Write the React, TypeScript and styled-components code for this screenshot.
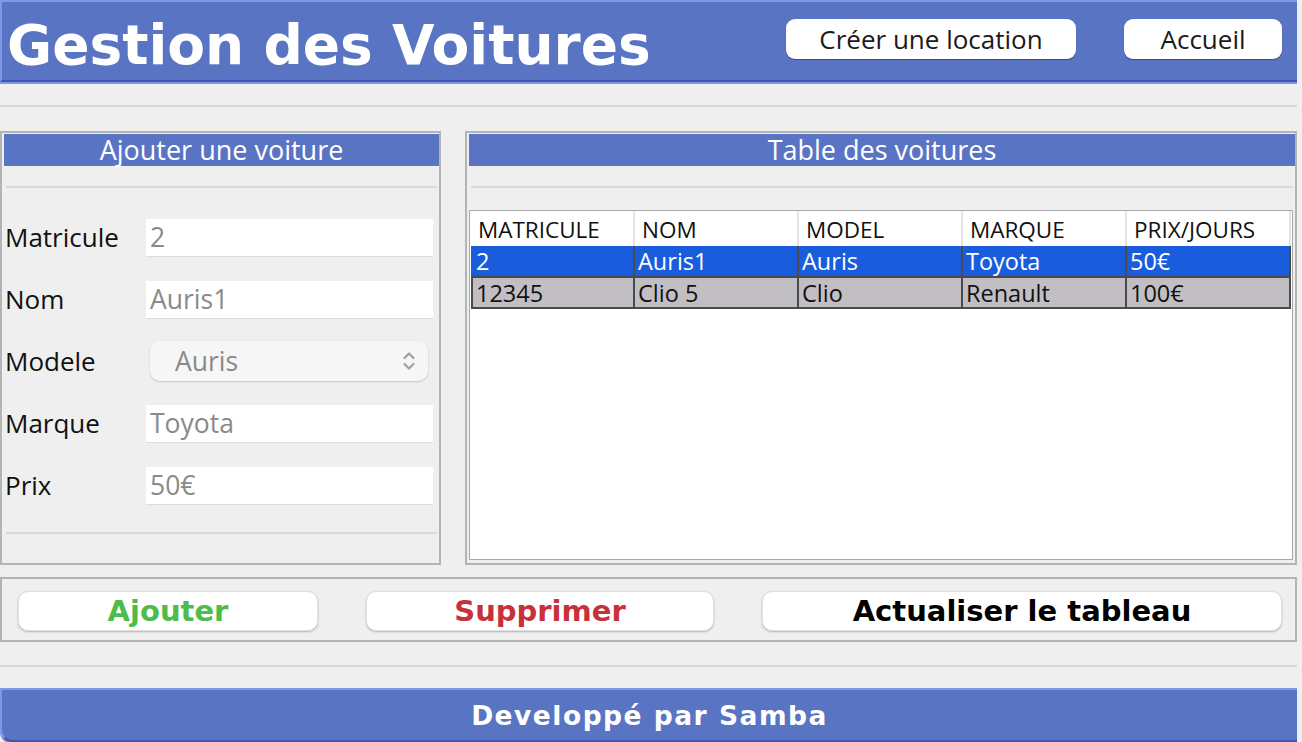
import React from 'react';
import styled, { createGlobalStyle } from 'styled-components';

const BLUE = '#5a74c4';
const BLUE_LIGHT = '#7d97ec';
const BLUE_DARK = '#3f57a6';

const GlobalStyle = createGlobalStyle`
  html, body {
    margin: 0;
    padding: 0;
    background: #efefef;
  }
  body {
    font-family: 'Open Sans', 'DejaVu Sans', sans-serif;
  }
  * {
    box-sizing: border-box;
  }
`;

const Window = styled.div`
  width: 1302px;
  height: 742px;
  overflow: hidden;
  background: #efefef;
`;

const Frame = styled.div`
  width: 1297px;
  display: flex;
  flex-direction: column;
`;

const TopBar = styled.header`
  height: 82px;
  display: flex;
  align-items: center;
  gap: 48px;
  padding: 0 15px 0 5px;
  background: ${BLUE};
  border-top: 2px solid ${BLUE_LIGHT};
  border-left: 2px solid ${BLUE_LIGHT};
  border-bottom: 2px solid ${BLUE_DARK};
  box-shadow: 0 2px 0 ${BLUE_LIGHT};
`;

const Title = styled.h1`
  flex: 1;
  margin: 0;
  padding-top: 8px;
  font-family: 'DejaVu Sans', sans-serif;
  font-weight: 700;
  font-size: 55px;
  line-height: 1;
  color: #ffffff;
  white-space: nowrap;
`;

const NavButton = styled.button<{ $width: number }>`
  width: ${(p) => p.$width}px;
  height: 40px;
  margin-top: -4px;
  border: none;
  border-radius: 9px;
  background: #ffffff;
  box-shadow: 0 1px 1px rgba(0, 0, 0, 0.35);
  font-family: 'Open Sans', sans-serif;
  font-size: 26px;
  color: #1a1a1a;
  padding: 0;
  cursor: pointer;
`;

const Rule = styled.hr<{ $top: number; $bottom: number; $side?: number }>`
  border: none;
  height: 2px;
  background: #d8d8d8;
  margin: ${(p) => `${p.$top}px ${p.$side ?? 0}px ${p.$bottom}px`};
`;

const Workspace = styled.main`
  display: flex;
  gap: 24px;
  height: 434px;
`;

const Panel = styled.section<{ $width: number }>`
  width: ${(p) => p.$width}px;
  border: 2px solid #b4b4b4;
  padding: 1px 0 1px 2px;
  display: flex;
  flex-direction: column;
`;

const PanelTitle = styled.h2`
  margin: 0;
  height: 32px;
  background: ${BLUE};
  color: #ffffff;
  font-family: 'Open Sans', sans-serif;
  font-weight: 400;
  font-size: 27px;
  line-height: 32px;
  text-align: center;
`;

const Form = styled.div`
  display: flex;
  flex-direction: column;
`;

const FormRow = styled.div`
  height: 62px;
  display: grid;
  grid-template-columns: 142px 1fr;
  align-items: center;
`;

const Label = styled.label`
  padding-left: 1px;
  font-size: 26px;
  color: #111111;
`;

const Field = styled.div`
  height: 37px;
  margin-right: 6px;
  padding-left: 4px;
  background: #ffffff;
  box-shadow: 0 1px 0 #dcdcdc;
  font-size: 26.5px;
  line-height: 37px;
  color: #8a8a8a;
`;

const Combo = styled.div`
  height: 40px;
  margin: 0 11px 0 4px;
  padding: 0 12px 0 25px;
  display: flex;
  align-items: center;
  justify-content: space-between;
  border-radius: 10px;
  background: #f6f6f6;
  box-shadow: 0 1px 2px rgba(0, 0, 0, 0.18);
  font-size: 26.5px;
  color: #8a8a8a;
`;

const TableBox = styled.div`
  height: 350px;
  margin-right: 2px;
  border: 1px solid #a9a9a9;
  background: #ffffff;
  padding: 0 1px;
`;

const Row = styled.div`
  display: grid;
  grid-template-columns: repeat(5, 164px);
`;

const HeadCell = styled.div`
  height: 35px;
  padding: 3px 0 0 7px;
  font-size: 22.5px;
  color: #111111;
  border-right: 2px solid #e4e4e4;
  white-space: nowrap;
`;

const Cell = styled.div<{ $selected: boolean; $first: boolean }>`
  height: ${(p) => (p.$selected ? 32 : 31)}px;
  padding-left: 3px;
  font-size: 23.5px;
  line-height: 30px;
  background: ${(p) => (p.$selected ? '#1a5ddc' : '#c1bfc4')};
  color: ${(p) => (p.$selected ? '#ffffff' : '#111111')};
  border-right: 2px solid #4a4a4a;
  border-bottom: 2px solid #4a4a4a;
  border-left: ${(p) => (p.$first ? `2px solid ${p.$selected ? '#1a5ddc' : '#4a4a4a'}` : 'none')};
  white-space: nowrap;
`;

const ActionBar = styled.div`
  margin-top: 12px;
  height: 65px;
  border: 2px solid #b4b4b4;
  padding: 12px 0 0 16px;
  display: flex;
  gap: 48px;
`;

const ActionButton = styled.button<{ $width: number; $color: string }>`
  width: ${(p) => p.$width}px;
  height: 40px;
  border: 1px solid #e0e0e0;
  border-radius: 10px;
  background: #ffffff;
  box-shadow: 0 1px 2px rgba(0, 0, 0, 0.25);
  font-family: 'DejaVu Sans', sans-serif;
  font-weight: 700;
  font-size: 29px;
  color: ${(p) => p.$color};
  padding: 0;
  cursor: pointer;
`;

const Footer = styled.footer`
  height: 54px;
  display: flex;
  align-items: center;
  justify-content: center;
  background: ${BLUE};
  border-top: 2px solid ${BLUE_LIGHT};
  border-left: 2px solid ${BLUE_LIGHT};
  border-bottom: 2px solid ${BLUE_DARK};
  border-bottom-left-radius: 12px;
  box-shadow: 0 2px 0 ${BLUE_LIGHT};
  font-family: 'DejaVu Sans', sans-serif;
  font-weight: 700;
  font-size: 26.5px;
  letter-spacing: 1.5px;
  color: #ffffff;
`;

const Chevrons = () => (
  <svg width="14" height="22" viewBox="0 0 14 22" fill="none" stroke="#a0a0a0" strokeWidth="2.2" strokeLinecap="round" strokeLinejoin="round">
    <path d="M2.5 8 L7 3.5 L11.5 8" />
    <path d="M2.5 14 L7 18.5 L11.5 14" />
  </svg>
);

const columns = ['MATRICULE', 'NOM', 'MODEL', 'MARQUE', 'PRIX/JOURS'];

const cars = [
  { matricule: '2', nom: 'Auris1', model: 'Auris', marque: 'Toyota', prix: '50€' },
  { matricule: '12345', nom: 'Clio 5', model: 'Clio', marque: 'Renault', prix: '100€' },
];

const fields = [
  { label: 'Matricule', value: '2' },
  { label: 'Nom', value: 'Auris1' },
  { label: 'Modele', value: 'Auris', combo: true },
  { label: 'Marque', value: 'Toyota' },
  { label: 'Prix', value: '50€' },
];

export default function App() {
  const selected = 0;

  return (
    <Window>
      <GlobalStyle />
      <Frame>
        <TopBar>
          <Title>Gestion des Voitures</Title>
          <NavButton $width={290}>Créer une location</NavButton>
          <NavButton $width={158}>Accueil</NavButton>
        </TopBar>

        <Rule $top={23} $bottom={24} />

        <Workspace>
          <Panel $width={441}>
            <PanelTitle>Ajouter une voiture</PanelTitle>
            <Rule $top={20} $bottom={18} $side={2} />
            <Form>
              {fields.map((f) => (
                <FormRow key={f.label}>
                  <Label>{f.label}</Label>
                  {f.combo ? (
                    <Combo>
                      {f.value}
                      <Chevrons />
                    </Combo>
                  ) : (
                    <Field>{f.value}</Field>
                  )}
                </FormRow>
              ))}
            </Form>
            <Rule $top={16} $bottom={0} $side={2} />
          </Panel>

          <Panel $width={832}>
            <PanelTitle>Table des voitures</PanelTitle>
            <Rule $top={20} $bottom={22} $side={2} />
            <TableBox>
              <Row>
                {columns.map((c) => (
                  <HeadCell key={c}>{c}</HeadCell>
                ))}
              </Row>
              {cars.map((car, i) => {
                const values = [car.matricule, car.nom, car.model, car.marque, car.prix];
                return (
                  <Row key={car.matricule}>
                    {values.map((v, j) => (
                      <Cell key={j} $selected={i === selected} $first={j === 0}>
                        {v}
                      </Cell>
                    ))}
                  </Row>
                );
              })}
            </TableBox>
          </Panel>
        </Workspace>

        <ActionBar>
          <ActionButton $width={300} $color="#4cbc4a">Ajouter</ActionButton>
          <ActionButton $width={348} $color="#c8303a">Supprimer</ActionButton>
          <ActionButton $width={520} $color="#000000">Actualiser le tableau</ActionButton>
        </ActionBar>

        <Rule $top={23} $bottom={21} />

        <Footer>Developpé par Samba</Footer>
      </Frame>
    </Window>
  );
}
